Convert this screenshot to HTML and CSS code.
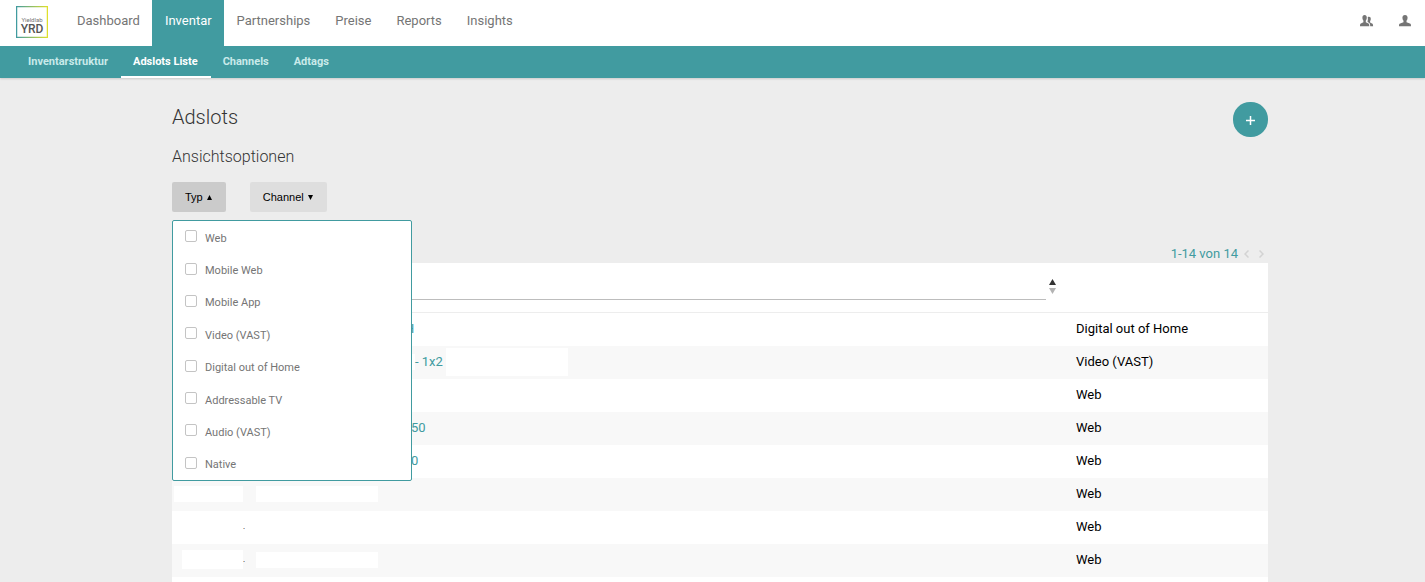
FILE: index.html
```html
<!DOCTYPE html>
<html lang="de">
<head>
    <meta charset="UTF-8">
    <meta name="viewport" content="width=device-width, initial-scale=1.0">
    <title>Adslots</title>
    <link rel="stylesheet" href="styles.css">
</head>
<body>
    <header>
        <div class="topbar">
            <a href="#" class="logo">
                <svg width="32" height="32" viewBox="0 0 32 32">
                    <defs>
                        <linearGradient id="frame" x1="0" y1="0" x2="1" y2="0">
                            <stop offset="0" stop-color="#419ba0"/>
                            <stop offset="1" stop-color="#dfe02c"/>
                        </linearGradient>
                    </defs>
                    <rect x="0.500" y="0.500" width="31" height="31" fill="#fff" stroke="url(#frame)" stroke-width="1.500"/>
                    <text x="16" y="16" class="logo-small">Yieldlab</text>
                    <text x="16" y="27" class="logo-big">YRD</text>
                </svg>
            </a>
            <nav class="main-nav">
                <a href="#">Dashboard</a>
                <a href="#" class="active">Inventar</a>
                <a href="#">Partnerships</a>
                <a href="#">Preise</a>
                <a href="#">Reports</a>
                <a href="#">Insights</a>
            </nav>
            <div class="user-icons">
                <a href="#" aria-label="Benutzer">
                    <svg width="14" height="12" viewBox="0 0 14 12">
                        <path d="M4.6 0C6 0 6.8 1 6.8 2.6c0 1.3-.4 2.3-1 2.9v1.7l2.6 1.2c.7.4.9 1 .9 2.8H0c0-1.800.2-2.400.9-2.800l2.500-1.200V5.500c-.6-.6-1-1.600-1-2.900C2.400 1 3.200 0 4.600 0z"/>
                        <path d="M9 1.800c1.200 0 1.800.8 1.800 2.100 0 1-.3 1.700-.7 2.200v1.300l1.900 1c.8.4 1.100 1 1.100 2.800h-2.900c0-1.900-.3-2.900-1.300-3.400L7.600 7V6.100c.4-.8.400-2.800.1-3.900.3-.3.700-.4 1.300-.4z"/>
                    </svg>
                </a>
                <a href="#" aria-label="Profil">
                    <svg width="12" height="12" viewBox="0 0 12 12">
                        <path d="M6 0c1.700 0 2.600 1.100 2.600 2.800 0 1.300-.4 2.300-1.100 3v1.500l3.400 1.200c.9.4 1.100 1 1.100 2.700H0c0-1.700.2-2.300 1.100-2.700l3.400-1.200V5.800c-.7-.7-1.100-1.700-1.100-3C3.400 1.100 4.300 0 6 0z"/>
                    </svg>
                </a>
            </div>
        </div>
        <nav class="sub-nav">
            <a href="#">Inventarstruktur</a>
            <a href="#" class="active">Adslots Liste</a>
            <a href="#">Channels</a>
            <a href="#">Adtags</a>
        </nav>
    </header>

    <main>
        <div class="title-row">
            <h1>Adslots</h1>
            <button type="button" class="add" aria-label="Neuer Adslot">
                <svg width="9" height="9" viewBox="0 0 9 9"><path d="M4.500 0v9M0 4.500h9"/></svg>
            </button>
        </div>
        <h2>Ansichtsoptionen</h2>

        <div class="filters">
            <div class="filter">
                <button type="button" class="open">Typ <svg width="5" height="5" viewBox="0 0 5 5"><path d="M0 5h5L2.500 0z"/></svg></button>
                <!-- Auswahl der Typen -->
                <div class="menu">
                    <label><input type="checkbox"><span>Web</span></label>
                    <label><input type="checkbox"><span>Mobile Web</span></label>
                    <label><input type="checkbox"><span>Mobile App</span></label>
                    <label><input type="checkbox"><span>Video (VAST)</span></label>
                    <label><input type="checkbox"><span>Digital out of Home</span></label>
                    <label><input type="checkbox"><span>Addressable TV</span></label>
                    <label><input type="checkbox"><span>Audio (VAST)</span></label>
                    <label><input type="checkbox"><span>Native</span></label>
                </div>
            </div>
            <div class="filter">
                <button type="button">Channel <svg width="5" height="5" viewBox="0 0 5 5"><path d="M0 0h5L2.500 5z"/></svg></button>
            </div>
        </div>

        <div class="pager">
            <span>1-14 von 14</span>
            <button type="button" disabled aria-label="Zurück"><svg width="5" height="8" viewBox="0 0 5 8"><path d="M4.500.5L1 4l3.500 3.500"/></svg></button>
            <button type="button" disabled aria-label="Weiter"><svg width="5" height="8" viewBox="0 0 5 8"><path d="M.5.5L4 4 .5 7.500"/></svg></button>
        </div>

        <table>
            <thead>
                <tr>
                    <th class="id"></th>
                    <th>
                        <div class="search">
                            <input type="text" aria-label="Name">
                            <svg width="7" height="15" viewBox="0 0 7 15">
                                <path d="M0 6h7L3.500 0z" fill="#333"/>
                                <path d="M0 9h7l-3.500 6z" fill="#b3b3b3"/>
                            </svg>
                        </div>
                    </th>
                    <th class="type"></th>
                </tr>
            </thead>
            <tbody>
                <tr>
                    <td class="id"></td>
                    <td><div class="name"><span class="mask short"></span><a href="#">H</a></div></td>
                    <td>Digital out of Home</td>
                </tr>
                <tr>
                    <td class="id"></td>
                    <td><div class="name"><span class="mask long"></span><a href="#">- 1x2</a><span class="mask tall"></span></div></td>
                    <td>Video (VAST)</td>
                </tr>
                <tr>
                    <td class="id"></td>
                    <td></td>
                    <td>Web</td>
                </tr>
                <tr>
                    <td class="id"></td>
                    <td><div class="name"><span class="mask medium"></span><a href="#">50</a></div></td>
                    <td>Web</td>
                </tr>
                <tr>
                    <td class="id"></td>
                    <td><div class="name"><span class="mask medium"></span><a href="#">0</a></div></td>
                    <td>Web</td>
                </tr>
                <tr>
                    <td class="id"><div class="name"><span class="mask number"></span></div></td>
                    <td><div class="name"><span class="mask"></span></div></td>
                    <td>Web</td>
                </tr>
                <tr>
                    <td class="id"><div class="name"><span class="dot">.</span></div></td>
                    <td></td>
                    <td>Web</td>
                </tr>
                <tr>
                    <td class="id"><div class="name"><span class="mask number small"></span><span class="dot">.</span></div></td>
                    <td><div class="name"><span class="mask"></span></div></td>
                    <td>Web</td>
                </tr>
                <tr>
                    <td class="id"></td>
                    <td></td>
                    <td></td>
                </tr>
            </tbody>
        </table>
    </main>
</body>
</html>
```

FILE: styles.css
```css
* {
    box-sizing: border-box;
}
body {
    margin: 0;
    height: 100vh;
    overflow: hidden;
    font-family: Roboto, 'Liberation Sans', sans-serif;
    font-size: 13px;
    background-color: #ededed;
    color: #000;
}
a {
    color: #419ba0;
    text-decoration: none;
}
svg {
    display: block;
}
button {
    border: none;
    cursor: pointer;
}
header {
    box-shadow: 0 1px 2px rgba(0, 0, 0, 0.15);
}
.topbar {
    display: flex;
    height: 46px;
    padding: 0 14px 0 16px;
    background-color: #fff;
}
.logo {
    margin: 6px 16px 0 0;
}
.logo-small, .logo-big {
    text-anchor: middle;
}
.logo-small {
    font-size: 6px;
    fill: #777;
}
.logo-big {
    font-size: 12px;
    font-weight: 500;
    fill: #555;
}
.main-nav {
    display: flex;
}
.main-nav a {
    padding: 0 12px 0 13px;
    line-height: 42px;
    color: #757575;
}
.main-nav .active {
    background-color: #419ba0;
    color: #fff;
}
.user-icons {
    display: flex;
    gap: 25px;
    margin: 15px 0 0 auto;
}
.user-icons svg {
    fill: #757575;
}
.sub-nav {
    display: flex;
    height: 32px;
    padding-left: 16px;
    background-color: #419ba0;
}
.sub-nav a {
    padding: 0 13px 0 12px;
    border-bottom: 2px solid transparent;
    font-size: 11px;
    font-weight: bold;
    line-height: 31px;
    color: #c9eaea;
}
.sub-nav .active {
    border-color: #fff;
    color: #fff;
}
main {
    padding: 24px 157px 0 172px;
}
.title-row {
    display: flex;
    justify-content: space-between;
}
h1, h2 {
    margin: 0;
    font-weight: 300;
    color: #333;
}
h1 {
    font-size: 20px;
    line-height: 30px;
}
h2 {
    margin: 10px 0 15px;
    font-size: 16px;
    line-height: 20px;
}
.add {
    display: flex;
    align-items: center;
    justify-content: center;
    width: 35px;
    height: 35px;
    padding: 2px 0 0;
    border-radius: 17px;
    background-color: #419ba0;
}
.add svg {
    fill: none;
    stroke: #fff;
    stroke-width: 1.5;
}
.filters {
    display: flex;
    gap: 24px;
}
.filter {
    position: relative;
}
.filter button {
    display: flex;
    align-items: center;
    gap: 4px;
    height: 30px;
    padding: 0 14px 0 13px;
    border-radius: 2px;
    background-color: #dedede;
    color: #000;
    font-family: 'Liberation Sans', Arial, sans-serif;
    font-size: 11px;
}
.filter .open {
    background-color: #cbcbcb;
}
.menu {
    position: absolute;
    top: 38px;
    left: 0;
    z-index: 1;
    display: flex;
    flex-direction: column;
    width: 240px;
    height: 261px;
    border: 1px solid #419ba0;
    border-radius: 2px;
    background-color: #fff;
}
.menu label {
    display: flex;
    flex: 1;
    align-items: center;
    gap: 8px;
    padding-left: 12px;
    font-size: 11px;
    color: #757575;
}
.menu input {
    appearance: none;
    width: 12px;
    height: 12px;
    margin: 0 0 2px;
    border: 1px solid #c4c4c4;
    border-radius: 2px;
    background-color: #fff;
}
.menu span {
    padding-top: 2px;
}
.pager {
    display: flex;
    align-items: center;
    justify-content: flex-end;
    height: 18px;
    margin-top: 33px;
    padding-bottom: 1px;
    color: #419ba0;
}
.pager button {
    padding: 0;
    margin: 0 4px 0 6px;
    background: none;
}
.pager svg {
    fill: none;
    stroke: #d3d3d3;
    stroke-width: 1.5;
}
table {
    width: 100%;
    table-layout: fixed;
    border-collapse: separate;
    border-spacing: 0;
    background-color: #fff;
}
th {
    height: 50px;
    padding: 0;
    border-bottom: 1px solid #ededed;
}
td {
    height: 33px;
    padding: 0 0 2px;
}
td:last-child {
    padding-left: 12px;
}
tbody tr:nth-child(even) {
    background-color: #f8f8f8;
}
.id {
    width: 84px;
}
.type {
    width: 204px;
}
.search {
    display: flex;
    align-items: center;
    gap: 3px;
    padding-right: 8px;
}
.search input {
    flex: 1;
    height: 24px;
    padding: 0;
    border: none;
    border-bottom: 1px solid #bdbdbd;
    outline: none;
}
.search svg {
    margin-bottom: 2px;
}
.name {
    display: flex;
    align-items: center;
}
/* ausgeblendete Namen und IDs */
.mask {
    width: 122px;
    height: 16px;
    background-color: #fff;
}
.mask.short {
    width: 149px;
}
.mask.medium {
    width: 155px;
}
.mask.long {
    width: 159px;
}
.mask.tall {
    height: 28px;
    margin-left: 3px;
}
.id .name {
    justify-content: flex-end;
    padding-right: 13px;
}
.mask.number {
    width: 69px;
}
.mask.small {
    width: 61px;
    height: 19px;
}
.dot {
    width: 1px;
    margin-right: -1px;
    font-size: 8px;
}
```
